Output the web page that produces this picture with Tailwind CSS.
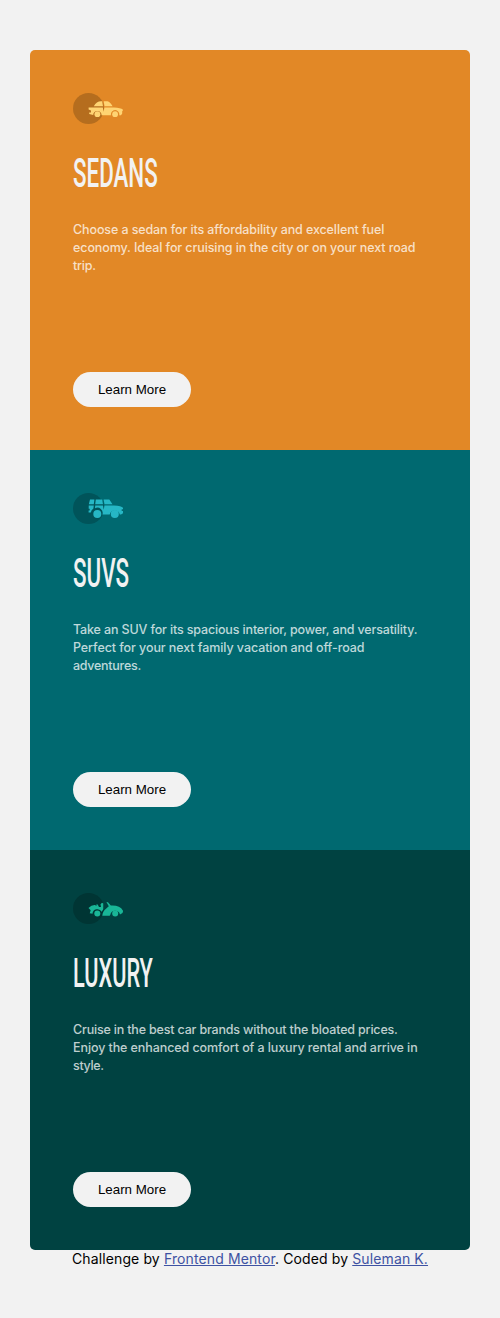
<!DOCTYPE html>
<html lang="en">
<head>
<meta charset="utf-8">
<meta name="viewport" content="width=device-width, initial-scale=1">
<title>3-column preview card</title>
<script src="https://cdn.jsdelivr.net/npm/@tailwindcss/browser@4"></script>
</head>
<body class="bg-[#f2f2f2] px-[30px] pt-[50px] h-[1318px] font-['Inter',sans-serif]">
<main class="rounded-[5px] overflow-hidden">
  <section class="h-[400px] bg-[#e28826] px-[43px] py-[43px] flex flex-col items-start">
    <svg class="w-[50px] h-[31px] shrink-0" viewBox="0 0 50 31">
      <circle cx="15.5" cy="15.5" r="15.5" fill="#b56d1e"/>
      <g fill="#ffd473">
        <path d="M20.8 13.2Q23.5 8.2 28 8.2H29.2L30 13.2ZM30.7 8.2H34.5Q37 8.8 39.6 13.2H31.5Z"/>
        <path d="M15.6 14.6H29.8L30.7 18.8L31.4 14.6H41Q48 14.9 50.2 17L49.2 18.2V20.5L48 22.2H46.2A4.2 4.2 0 1 0 38 22.2H28.6A4.2 4.2 0 1 0 20.2 22L16.2 21V19.4H18V17.5L15.6 16.4Z"/>
        <circle cx="24.4" cy="21.2" r="2.9"/><circle cx="42.1" cy="21.2" r="2.9"/>
      </g>
    </svg>
    <h2 class="mt-[25px] h-[48px] leading-[48px] text-[41px] font-medium font-['Roboto',sans-serif] text-[#f2f2f2] origin-left scale-x-[0.545]">SEDANS</h2>
    <p class="mt-[24px] text-[12.5px] leading-[18px] font-medium text-white/75 whitespace-nowrap">
      <span class="block tracking-[-0.11px]">Choose a sedan for its affordability and excellent fuel</span>
      <span class="block tracking-[-0.09px]">economy. Ideal for cruising in the city or on your next road</span>
      <span class="block tracking-[-0.2px]">trip.</span>
    </p>
    <button class="mt-auto w-[118px] h-[35px] rounded-full bg-[#f2f2f2] text-black text-[13.333px] font-['Liberation_Sans',sans-serif]">Learn More</button>
  </section>
  <section class="h-[400px] bg-[#006970] px-[43px] py-[43px] flex flex-col items-start">
    <svg class="w-[50px] h-[31px] shrink-0" viewBox="0 0 50 31">
      <circle cx="15.5" cy="15.5" r="15.5" fill="#00545a"/>
      <g fill="#26b7c5">
        <path d="M17 6.5H21.4L20.8 11.2H15.8ZM22.8 6.5H29.2L30 11.2H22.2ZM30.6 6.5H36.3L39.5 11.2H31.5Z"/>
        <path d="M15.7 12.6H20.8L20.4 15.5A6 6 0 0 0 17.8 19.5H15.6V17.4H16.7V15.8H15.7ZM22.2 12.6H30L30.7 16.7L31.5 12.6H41Q48.5 13 50 14.8V16.3H48.7V18H50V20.2L48 21.5H46.8A5.2 5.2 0 0 0 36.7 21.5H29.4A5.2 5.2 0 0 0 22 15.3Z"/>
        <circle cx="24.3" cy="20.9" r="4"/><circle cx="41.8" cy="20.9" r="4"/>
      </g>
    </svg>
    <h2 class="mt-[25px] h-[48px] leading-[48px] text-[41px] font-medium font-['Roboto',sans-serif] text-[#f2f2f2] origin-left scale-x-[0.545]">SUVS</h2>
    <p class="mt-[24px] text-[12.5px] leading-[18px] font-medium text-white/75 whitespace-nowrap">
      <span class="block tracking-[-0.15px]">Take an SUV for its spacious interior, power, and versatility.</span>
      <span class="block tracking-[-0.08px]">Perfect for your next family vacation and off-road</span>
      <span class="block tracking-[-0.27px]">adventures.</span>
    </p>
    <button class="mt-auto w-[118px] h-[35px] rounded-full bg-[#f2f2f2] text-black text-[13.333px] font-['Liberation_Sans',sans-serif]">Learn More</button>
  </section>
  <section class="h-[400px] bg-[#004241] px-[43px] py-[43px] flex flex-col items-start">
    <svg class="w-[50px] h-[31px] shrink-0" viewBox="0 0 50 31">
      <circle cx="15.5" cy="15.5" r="15.5" fill="#003534"/>
      <g fill="#19b697">
        <path d="M15.5 15Q18.5 11.8 22 12L23.5 13L23.3 11.5H24.7L26 14H28L27.5 11.2L29 9.8L30.3 10.5L30.3 16.3L28.7 18.8A4.9 4.9 0 0 0 19.5 20.8L16.7 20.2L17.7 17.2Z"/>
        <path d="M33.4 9L35 9.2L37.8 12.6Q47 12 50.2 18L49.5 20L47 21.5A5 5 0 0 0 37.3 21.8L36.7 22.8H29.3Q29.5 18.5 33.3 15.5L35.8 13.3Z"/>
        <circle cx="24.3" cy="20.6" r="3"/><circle cx="42.2" cy="20.6" r="3"/>
      </g>
    </svg>
    <h2 class="mt-[25px] h-[48px] leading-[48px] text-[41px] font-medium font-['Roboto',sans-serif] text-[#f2f2f2] origin-left scale-x-[0.53]">LUXURY</h2>
    <p class="mt-[24px] text-[12.5px] leading-[18px] font-medium text-white/75 whitespace-nowrap">
      <span class="block tracking-[-0.18px]">Cruise in the best car brands without the bloated prices.</span>
      <span class="block tracking-[-0.09px]">Enjoy the enhanced comfort of a luxury rental and arrive in</span>
      <span class="block tracking-[-0.33px]">style.</span>
    </p>
    <button class="mt-auto w-[118px] h-[35px] rounded-full bg-[#f2f2f2] text-black text-[13.333px] font-['Liberation_Sans',sans-serif]">Learn More</button>
  </section>
</main>
<footer class="text-center text-[14px] leading-[18px] tracking-[0.12px] whitespace-nowrap text-black">Challenge by <a href="#" class="underline text-[#3e52a3]">Frontend Mentor</a>. Coded by <a href="#" class="underline text-[#3e52a3]">Suleman K.</a></footer>
</body>
</html>
